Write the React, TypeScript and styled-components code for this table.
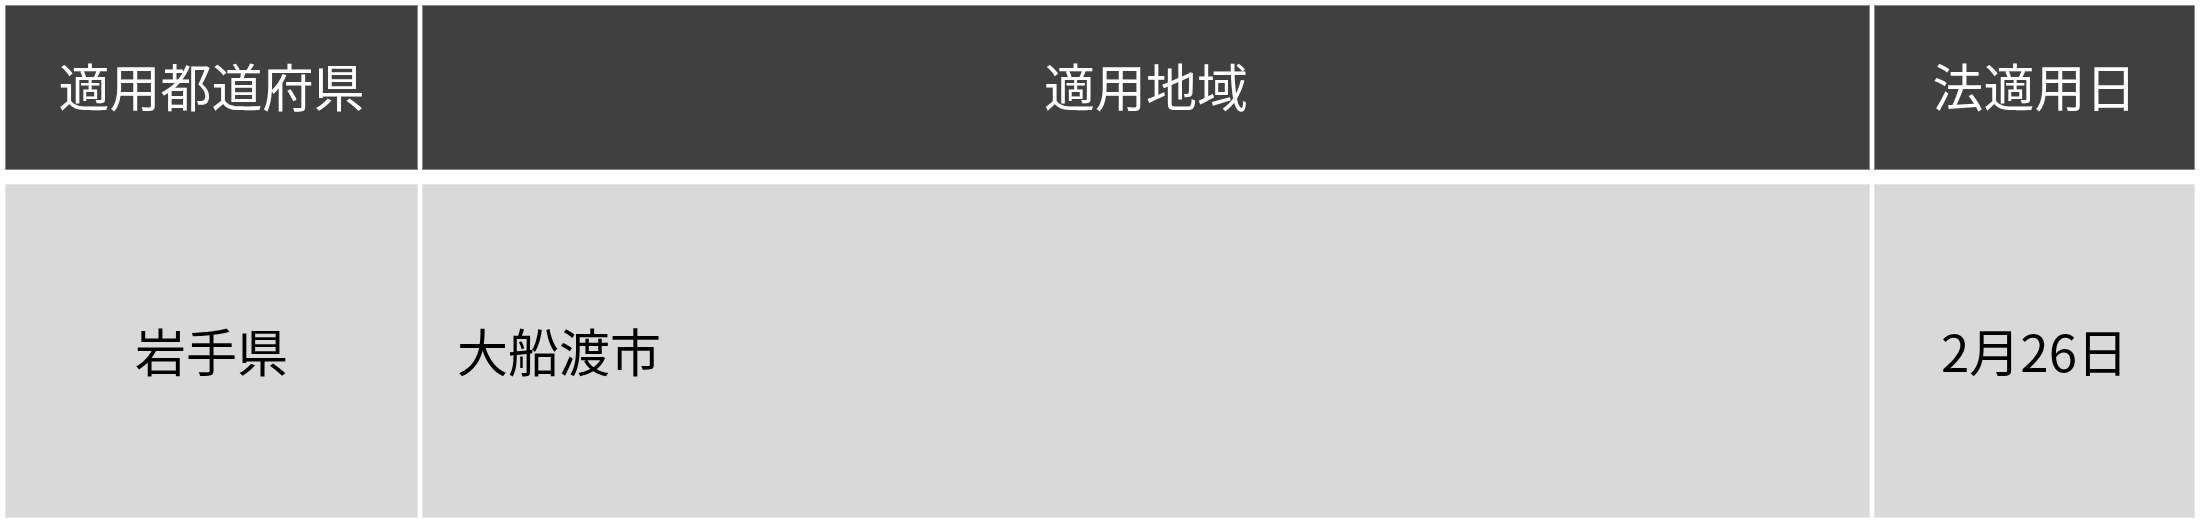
import { createGlobalStyle, styled } from "styled-components";

const GlobalStyle = createGlobalStyle`
    body {
        margin: 0;
        background: #ffffff;
        font-family: "Noto Sans CJK JP", "Noto Sans", sans-serif;
    }
`;

const Table = styled.div`
    display: grid;
    grid-template-columns: 413px 1448px 321px;
    grid-template-rows: 165px 334px;
    column-gap: 4px;
    row-gap: 14px;
    padding: 5px 0 0 5px;
`;

const HeadCell = styled.div`
    display: flex;
    align-items: center;
    justify-content: center;
    background: #404040;
    border: 1px solid #8a8a8a;
    color: #ffffff;
    font-size: 51px;
    line-height: 1;
    padding-bottom: 4px;
`;

const BodyCell = styled.div<{ $align?: "left" | "center" }>`
    display: flex;
    align-items: center;
    justify-content: ${(p) => (p.$align === "left" ? "flex-start" : "center")};
    padding-left: ${(p) => (p.$align === "left" ? "34px" : "0")};
    padding-bottom: 2px;
    background: #d9d9d9;
    border: 1px solid #e6e6e6;
    color: #000000;
    font-size: 51px;
    line-height: 1;
`;

function App() {
    return (
        <>
            <GlobalStyle />
            <Table>
                <HeadCell>適用都道府県</HeadCell>
                <HeadCell>適用地域</HeadCell>
                <HeadCell>法適用日</HeadCell>
                <BodyCell>岩手県</BodyCell>
                <BodyCell $align="left">大船渡市</BodyCell>
                <BodyCell>2月26日</BodyCell>
            </Table>
        </>
    );
}

export default App;
